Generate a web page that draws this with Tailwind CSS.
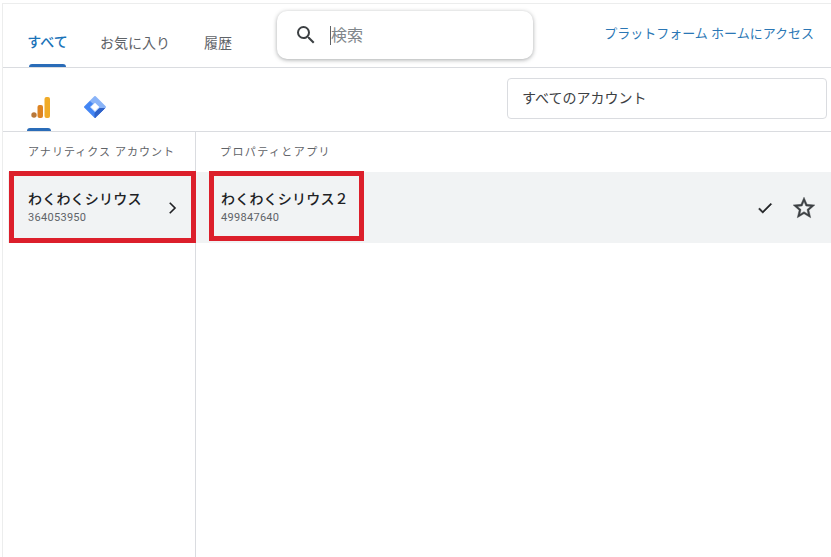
<!DOCTYPE html>
<html lang="ja">
<head>
    <meta charset="UTF-8">
    <title>アカウントの選択</title>
    <script src="https://cdn.jsdelivr.net/npm/@tailwindcss/browser@4"></script>
</head>
<body class="w-[831px] h-[557px] overflow-hidden bg-white font-['Roboto','Noto_Sans_CJK_JP',sans-serif] text-[#3c4043]">
    <div class="relative h-[557px] ml-[2px] mt-[3px] border-l border-t border-[#eceded] pb-[3px]">
        <!-- Header -->
        <header class="relative h-[64px] border-b border-[#dadce0]">
            <nav class="flex pl-[26px] h-full">
                <a class="flex flex-col justify-end items-center w-[37px] text-[14px] font-medium text-[#1a73b8]">
                    <span class="mb-[11px] whitespace-nowrap">すべて</span>
                    <span class="w-full h-[3px] bg-[#2a6cb8] rounded-t-sm"></span>
                </a>
                <a class="ml-[34px] mb-[13px] self-end text-[14px] text-[#5f6368] whitespace-nowrap">お気に入り</a>
                <a class="ml-[34px] mb-[13px] self-end text-[14px] text-[#5f6368] whitespace-nowrap">履歴</a>
            </nav>
            <div class="absolute left-[274px] top-[7px] w-[256px] h-[48px] bg-white rounded-[10px] shadow-[0_1px_4px_rgba(60,64,67,0.45)] flex items-center">
                <svg class="ml-[17px] w-[24px] h-[24px] text-[#3c4043]" viewBox="0 0 24 24" fill="currentColor">
                    <path d="M15.5 14h-.79l-.28-.27A6.47 6.47 0 0 0 16 9.5 6.5 6.5 0 1 0 9.5 16c1.61 0 3.09-.59 4.23-1.57l.27.28v.79l5 4.99L20.49 19l-4.99-5zm-6 0C7.01 14 5 11.99 5 9.5S7.01 5 9.5 5 14 7.01 14 9.5 11.99 14 9.5 14z"/>
                </svg>
                <span class="ml-[12px] w-px h-[19px] bg-[#5f6368]"></span>
                <span class="mt-[2px] text-[16px] text-[#80868b]">検索</span>
            </div>
            <a class="absolute right-[17px] top-[20px] text-[13px] text-[#2b77b5] whitespace-nowrap">プラットフォーム ホームにアクセス</a>
        </header>

        <!-- Product tabs -->
        <div class="relative h-[64px] border-b border-[#dadce0] flex pl-[24px]">
            <div class="relative w-[26px] flex justify-center pt-[27px]">
                <svg class="ml-[2px] w-[24px] h-[24px]" viewBox="0 0 24 24">
                    <rect x="15.5" y="2" width="5.5" height="21" rx="2" fill="#f0ab28"/>
                    <rect x="8.5" y="10" width="5.5" height="13" rx="2" fill="#dd8322"/>
                    <circle cx="5" cy="20" r="2.7" fill="#b9783a"/>
                </svg>
                <span class="absolute left-0 bottom-0 w-[24px] h-[3px] bg-[#2a6cb8] rounded-t-sm"></span>
            </div>
            <div class="ml-[30px] pt-[27px]">
                <svg class="w-[24px] h-[24px]" viewBox="0 0 24 24">
                    <path d="M12 2 L22 12 L12 22 L2 12 Z" fill="#8ab4f8" stroke="#8ab4f8" stroke-width="2" stroke-linejoin="round"/>
                    <path d="M1.5 12 L7 6.5 L9.5 9 L6 12 L12 18 L12 22.5 Z" fill="#4285f4" stroke="#4285f4" stroke-width="1" stroke-linejoin="round"/>
                    <path d="M12 18 L16.5 13.5 L21.5 13.5 L12 22.5 Z" fill="#2f62c9" stroke="#2f62c9" stroke-width="1" stroke-linejoin="round"/>
                    <path d="M12 7.7 L16.3 12 L12 16.3 L7.7 12 Z" fill="#fff"/>
                </svg>
            </div>
            <div class="absolute left-[504px] top-[10px] w-[320px] h-[41px] border border-[#dadce0] rounded flex items-center pl-[14px] text-[14px] text-[#3c4043]">すべてのアカウント</div>
        </div>

        <!-- Columns -->
        <div class="flex h-[425px]">
            <div class="w-[193px] shrink-0 border-r border-[#dadce0]">
                <div class="h-[40px] pl-[25px] pt-[2px] flex items-center text-[11px] tracking-[1.05px] text-[#5f6368] whitespace-nowrap">アナリティクス アカウント</div>
                <div class="h-[71px] ml-[5px] bg-[#f1f3f4] flex items-center justify-between pl-[20px] pr-[14px]">
                    <div class="-mt-[2px]">
                        <div class="text-[14px] font-medium tracking-[0.2px] text-[#202124] leading-[20px] whitespace-nowrap">わくわくシリウス</div>
                        <div class="text-[11px] tracking-[0.3px] text-[#5f6368] leading-[15px] mt-px">364053950</div>
                    </div>
                    <svg class="w-[18px] h-[18px] text-[#202124]" viewBox="0 0 24 24" fill="none" stroke="currentColor" stroke-width="2.2">
                        <path d="M9 5l7 7-7 7"/>
                    </svg>
                </div>
            </div>
            <div class="flex-1">
                <div class="h-[40px] pl-[24px] pt-[2px] flex items-center text-[11px] tracking-[1.4px] text-[#5f6368]">プロパティとアプリ</div>
                <div class="h-[71px] bg-[#f1f3f4] flex items-center pl-[25px] pr-[14px]">
                    <div class="flex-1 -mt-[2px]">
                        <div class="text-[14px] font-medium tracking-[0.2px] text-[#202124] leading-[20px] whitespace-nowrap">わくわくシリウス２</div>
                        <div class="text-[11px] tracking-[0.3px] text-[#5f6368] leading-[15px] mt-px">499847640</div>
                    </div>
                    <svg class="w-[18px] h-[18px] text-[#202124]" viewBox="0 0 24 24" fill="currentColor" stroke="currentColor" stroke-width="0.6">
                        <path d="M9 16.2 4.8 12l-1.4 1.4L9 19 21 7l-1.4-1.4z"/>
                    </svg>
                    <svg class="ml-[17px] w-[26px] h-[26px] text-[#3c4043]" viewBox="0 0 24 24" fill="currentColor" stroke="currentColor" stroke-width="0.4">
                        <path d="M22 9.24l-7.19-.62L12 2 9.19 8.63 2 9.24l5.46 4.73L5.82 21 12 17.27 18.18 21l-1.63-7.03L22 9.24zM12 15.4l-3.76 2.27 1-4.28-3.32-2.88 4.38-.38L12 6.1l1.71 4.04 4.38.38-3.32 2.88 1 4.28L12 15.4z"/>
                    </svg>
                </div>
            </div>
        </div>

        <!-- Red annotation boxes -->
        <div class="absolute left-[6px] top-[167px] w-[187px] h-[72px] border-[5px] border-[#dc1f2b]"></div>
        <div class="absolute left-[206px] top-[167px] w-[155px] h-[70px] border-[5px] border-[#dc1f2b]"></div>
    </div>
</body>
</html>
